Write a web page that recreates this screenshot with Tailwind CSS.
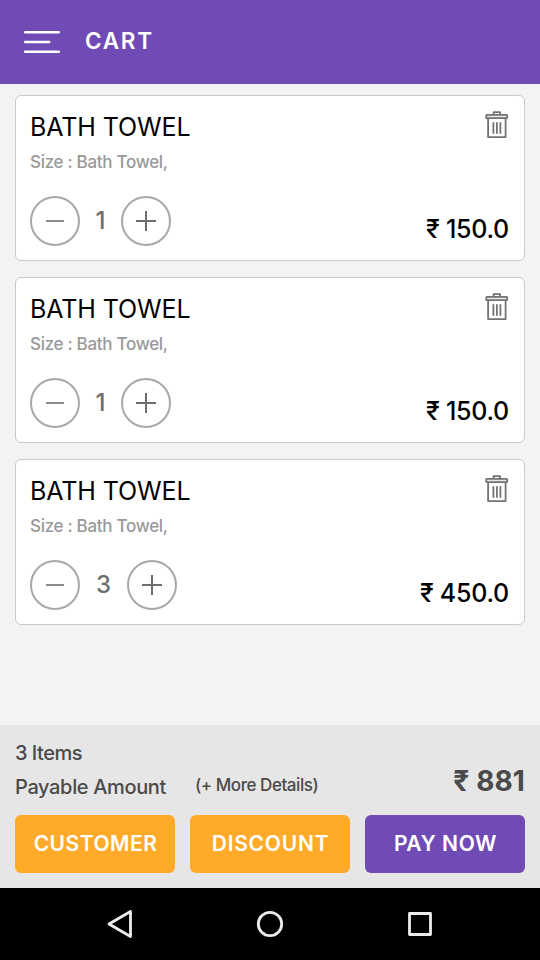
<!DOCTYPE html>
<html lang="en">
<head>
<meta charset="utf-8">
<title>Cart</title>
<script src="https://cdn.jsdelivr.net/npm/@tailwindcss/browser@4"></script>
</head>
<body class="bg-[#f3f3f3] font-['Inter','Noto_Sans',sans-serif]">
<svg class="hidden">
  <symbol id="trash" viewBox="0 0 24 28"><g fill="none" stroke="#737373" stroke-width="1.8" stroke-linejoin="round"><path d="M8.600 4V1.200h6.500V4"/><rect x="1.200" y="3.800" width="21" height="3.400" rx=".7" fill="#e8e8e8"/><path d="M3.100 7.400V26.100h17.500V7.400"/><path d="M8.400 11.200v11.600M11.900 11.200v11.600M15.400 11.200v11.600"/></g></symbol>
  <symbol id="minus" viewBox="0 0 50 50"><circle cx="25" cy="25" r="24" fill="none" stroke="#a8a8a8" stroke-width="2"/><path d="M16 25h18" stroke="#8c8c8c" stroke-width="2"/></symbol>
  <symbol id="plus" viewBox="0 0 50 50"><circle cx="25" cy="25" r="24" fill="none" stroke="#a8a8a8" stroke-width="2"/><path d="M15 25h20M25 15v20" stroke="#6e6e6e" stroke-width="2"/></symbol>
</svg>
<div class="flex h-[960px] w-[540px] flex-col overflow-hidden">
  <header class="flex h-[84px] shrink-0 items-center bg-[#714bb5] pl-6 text-white">
    <svg class="h-6 w-9" viewBox="0 0 36 24" stroke="#fff" stroke-width="2.500" stroke-linecap="round"><path d="M1.200 2.300h33.600M1.200 12h24M1.200 21.700h33.600"/></svg>
    <h1 class="ml-[25px] self-start text-[22.5px] font-semibold leading-[82px] tracking-[1.700px]">CART</h1>
  </header>
  <main class="flex grow flex-col gap-4 px-[15px] pt-[11px]">
    <article class="flex h-[166px] justify-between rounded-md border border-[#c9c9c9] bg-white pl-[14px] pr-[15px]">
      <div class="flex flex-col">
        <h2 class="mt-[15px] whitespace-nowrap text-[25px] leading-8 tracking-[-0.100px] text-black">BATH TOWEL</h2>
        <p class="mt-[7px] whitespace-nowrap text-[17px] font-medium leading-6 tracking-[-0.300px] text-[#999]">Size : Bath Towel,</p>
        <div class="mt-[22px] flex h-[50px] items-center">
          <svg class="size-[50px]"><use href="#minus"/></svg><span class="w-[41px] self-start text-center text-[24px] font-medium leading-[50px] text-[#6e6e6e]">1</span><svg class="size-[50px]"><use href="#plus"/></svg>
        </div>
      </div>
      <div class="flex flex-col items-end">
        <svg class="mt-[15px] h-7 w-6"><use href="#trash"/></svg>
        <p class="mt-[74px] whitespace-nowrap text-[25px] font-medium leading-8 tracking-[-0.250px] text-black">₹ 150.0</p>
      </div>
    </article>
    <article class="flex h-[166px] justify-between rounded-md border border-[#c9c9c9] bg-white pl-[14px] pr-[15px]">
      <div class="flex flex-col">
        <h2 class="mt-[15px] whitespace-nowrap text-[25px] leading-8 tracking-[-0.100px] text-black">BATH TOWEL</h2>
        <p class="mt-[7px] whitespace-nowrap text-[17px] font-medium leading-6 tracking-[-0.300px] text-[#999]">Size : Bath Towel,</p>
        <div class="mt-[22px] flex h-[50px] items-center">
          <svg class="size-[50px]"><use href="#minus"/></svg><span class="w-[41px] self-start text-center text-[24px] font-medium leading-[50px] text-[#6e6e6e]">1</span><svg class="size-[50px]"><use href="#plus"/></svg>
        </div>
      </div>
      <div class="flex flex-col items-end">
        <svg class="mt-[15px] h-7 w-6"><use href="#trash"/></svg>
        <p class="mt-[74px] whitespace-nowrap text-[25px] font-medium leading-8 tracking-[-0.250px] text-black">₹ 150.0</p>
      </div>
    </article>
    <article class="flex h-[166px] justify-between rounded-md border border-[#c9c9c9] bg-white pl-[14px] pr-[15px]">
      <div class="flex flex-col">
        <h2 class="mt-[15px] whitespace-nowrap text-[25px] leading-8 tracking-[-0.100px] text-black">BATH TOWEL</h2>
        <p class="mt-[7px] whitespace-nowrap text-[17px] font-medium leading-6 tracking-[-0.300px] text-[#999]">Size : Bath Towel,</p>
        <div class="mt-[22px] flex h-[50px] items-center">
          <svg class="size-[50px]"><use href="#minus"/></svg><span class="w-[47px] self-start text-center text-[24px] font-medium leading-[50px] text-[#6e6e6e]">3</span><svg class="size-[50px]"><use href="#plus"/></svg>
        </div>
      </div>
      <div class="flex flex-col items-end">
        <svg class="mt-[15px] h-7 w-6"><use href="#trash"/></svg>
        <p class="mt-[74px] whitespace-nowrap text-[25px] font-medium leading-8 tracking-[-0.250px] text-black">₹ 450.0</p>
      </div>
    </article>
  </main>
  <section class="flex h-[163px] shrink-0 flex-col bg-[#e6e6e6] px-[15px] text-[#4a4a4a]">
    <div class="flex h-[90px] justify-between">
      <div>
        <p class="mt-[12px] text-[20px] font-medium leading-8 tracking-[-0.500px]">3 Items</p>
        <div class="mt-[2px] flex whitespace-nowrap">
          <p class="w-[180px] text-[20px] font-medium leading-8 tracking-[-0.350px]">Payable Amount</p>
          <p class="text-[17px] font-medium leading-[28px] tracking-[-0.450px]">(+ More Details)</p>
        </div>
      </div>
      <p class="mt-[40px] whitespace-nowrap text-[28px] font-bold leading-8 tracking-[0.100px]">₹ 881</p>
    </div>
    <div class="grid grid-cols-3 gap-[15px] text-center text-[21px] font-semibold leading-[58px] text-white">
      <div class="h-[58px] rounded-md bg-[#ffab29] pl-px tracking-[0.500px]">CUSTOMER</div>
      <div class="h-[58px] rounded-md bg-[#ffab29] pl-px tracking-[0.750px]">DISCOUNT</div>
      <div class="h-[58px] rounded-md bg-[#714bb5] pl-px tracking-[0.600px]">PAY NOW</div>
    </div>
  </section>
  <nav class="flex h-[72px] shrink-0 items-center justify-between bg-black px-[104px]">
    <svg class="size-8" viewBox="0 0 32 32" fill="none" stroke="#ececec" stroke-width="2.800" stroke-linejoin="round"><path d="M26.500 3.500v25L5 16z"/></svg>
    <svg class="size-8" viewBox="0 0 32 32" fill="none" stroke="#ececec" stroke-width="2.800"><circle cx="16" cy="16" r="11.700"/></svg>
    <svg class="size-8" viewBox="0 0 32 32" fill="none" stroke="#ececec" stroke-width="2.800" stroke-linejoin="round"><rect x="5.500" y="5.500" width="21" height="21"/></svg>
  </nav>
</div>
</body>
</html>
